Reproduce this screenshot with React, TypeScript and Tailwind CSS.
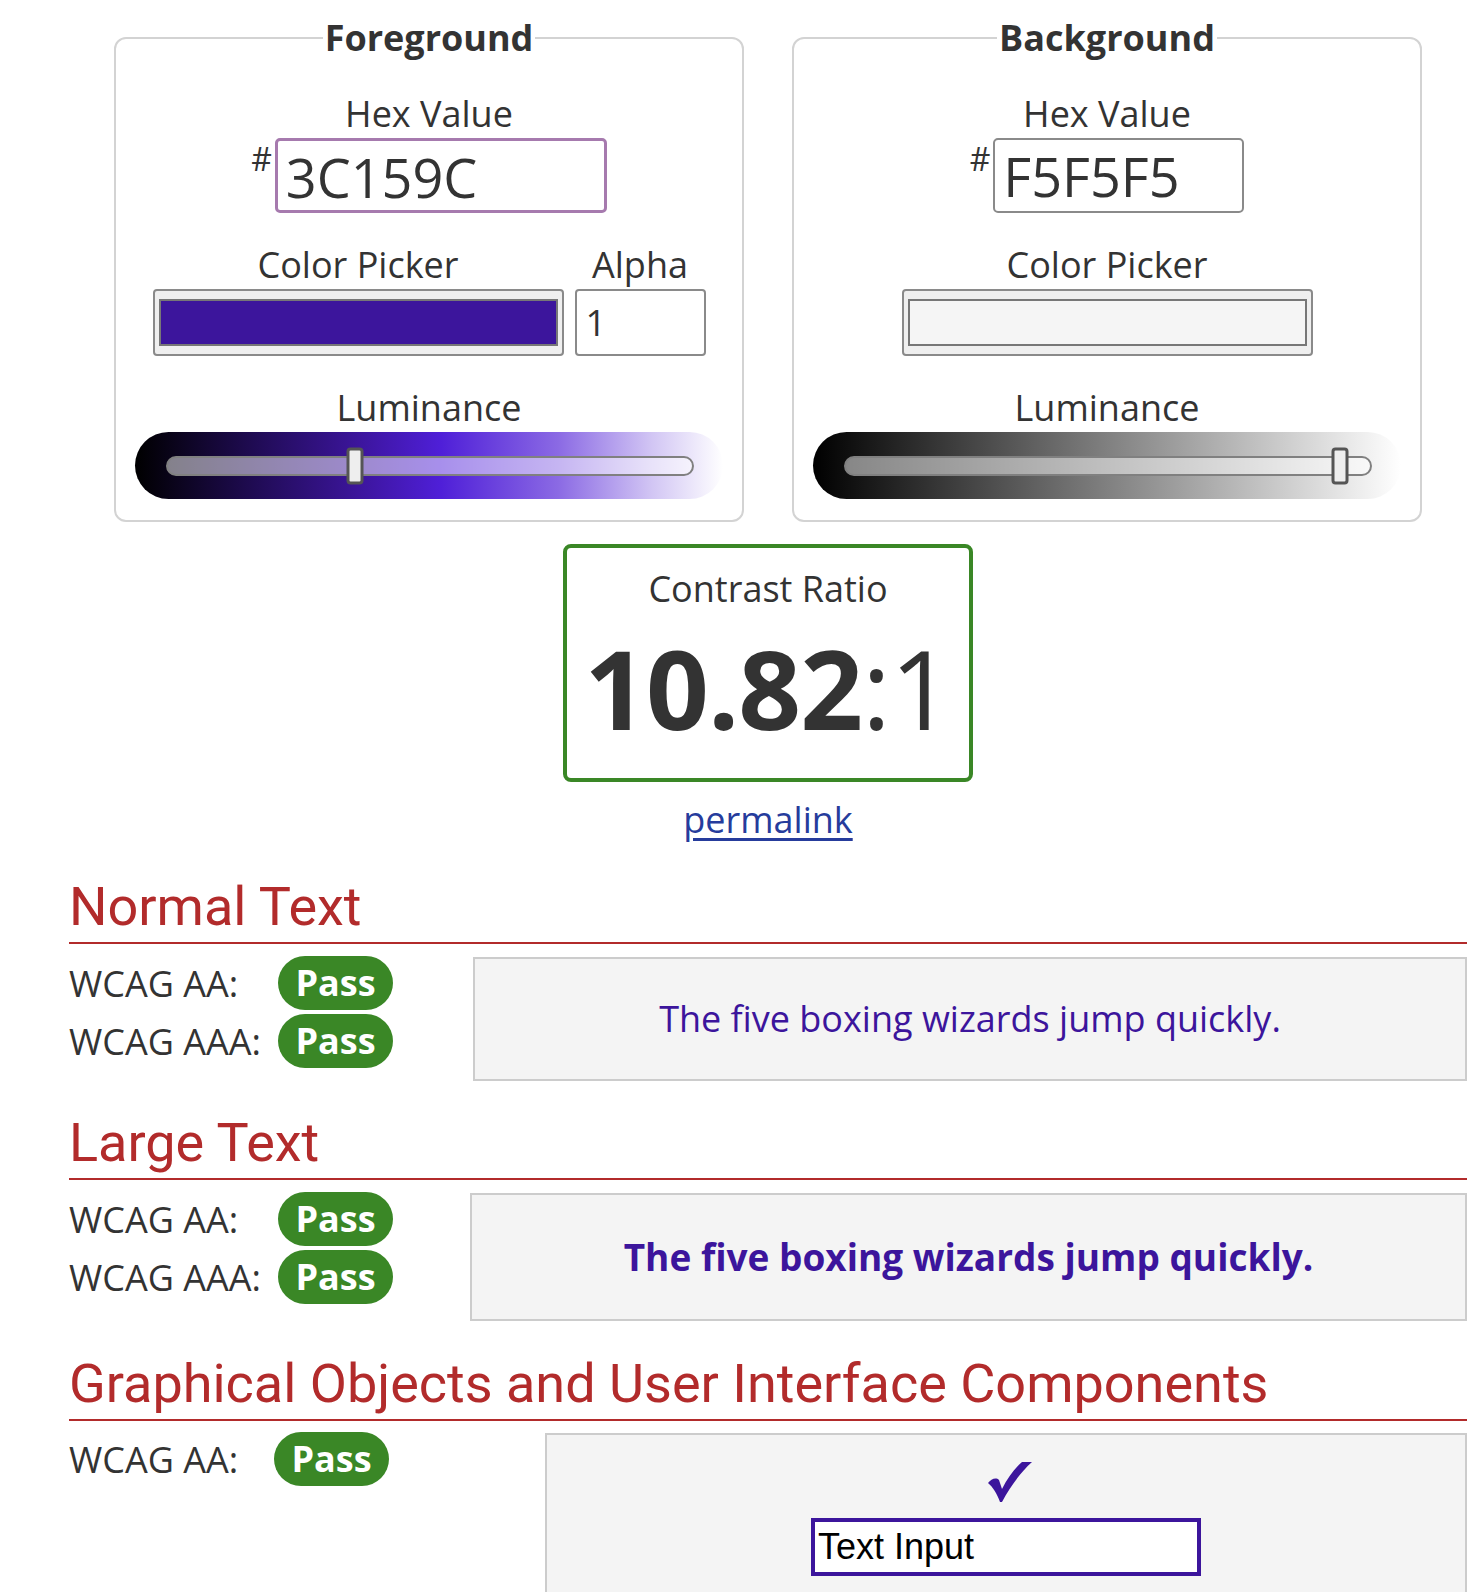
import React from "react";

const FG = "#3c159c";

function Label({ children }: { children: React.ReactNode }) {
  return <div className="text-[36px] leading-[49px] text-center">{children}</div>;
}

function Picker({ color, className }: { color: string; className?: string }) {
  return (
    <div
      className={
        "h-[67px] rounded-[4px] border-2 border-[#8a8a8a] bg-[#efefef] px-[4px] py-[8px] " +
        (className || "")
      }
    >
      <div className="h-full w-full border-2 border-[#777]" style={{ background: color }} />
    </div>
  );
}

function Slider({ gradient, thumbLeft }: { gradient: string; thumbLeft: number }) {
  return (
    <div
      className="relative mx-auto h-[67px] w-[588px] rounded-full pl-[31px] pr-[29px] flex items-center"
      style={{ background: gradient }}
    >
      <div className="relative h-[20px] w-full rounded-full border-2 border-[#808080] bg-white/50">
        <div
          className="absolute top-1/2 h-[37px] w-[17px] -translate-x-1/2 -translate-y-1/2 rounded-[4px] border-[3px] border-[#555] bg-[#eee]"
          style={{ left: thumbLeft }}
        />
      </div>
    </div>
  );
}

function Panel({
  title,
  hex,
  inputW,
  focused,
  alpha,
  color,
  gradient,
  thumbLeft,
}: {
  title: string;
  hex: string;
  inputW: string;
  focused: boolean;
  alpha: boolean;
  color: string;
  gradient: string;
  thumbLeft: number;
}) {
  return (
    <fieldset className="w-[630px] rounded-[12px] border-2 border-[#d3d3d3] pt-[26px] pb-[21px]">
      <legend className="mx-auto px-[2px] text-[36px] font-bold leading-[50px]">{title}</legend>
      <Label>Hex Value</Label>
      <div className="flex justify-center">
        <span className="mt-[4px] mr-[3px] text-[32px] leading-[34px]">#</span>
        <div
          className={
            "h-[75px] rounded-[5px] bg-white pl-[8px] text-[54px] leading-[72px] " +
            inputW +
            (focused ? " border-[3px] border-[#a67aae]" : " border-2 border-[#8a8a8a]")
          }
        >
          {hex}
        </div>
      </div>
      <div className="mt-[27px] flex justify-center gap-[11px]">
        <div>
          <Label>Color Picker</Label>
          <Picker color={color} className="w-[411px]" />
        </div>
        {alpha && (
          <div>
            <Label>Alpha</Label>
            <div className="h-[67px] w-[131px] rounded-[4px] border-2 border-[#8a8a8a] bg-white pl-[9px] text-[36px] leading-[64px]">
              1
            </div>
          </div>
        )}
      </div>
      <div className="mt-[27px]">
        <Label>Luminance</Label>
      </div>
      <Slider gradient={gradient} thumbLeft={thumbLeft} />
    </fieldset>
  );
}

function Pass() {
  return (
    <span className="flex h-[54px] w-[115px] items-center justify-center rounded-full bg-[#3a8726] text-[36px] font-bold leading-none text-white">
      Pass
    </span>
  );
}

function Row({ label, labelW }: { label: string; labelW: string }) {
  return (
    <div className="flex h-[54px] items-center">
      <span className={"text-[36px] leading-[49px] " + labelW}>{label}</span>
      <Pass />
    </div>
  );
}

function Heading({ children }: { children: React.ReactNode }) {
  return (
    <h2
      className="border-b-2 border-[#b22b2b] pb-[3px] text-[54px] leading-[65px] text-[#b22b2b]"
      style={{ fontFamily: "Roboto, 'Liberation Sans', sans-serif" }}
    >
      {children}
    </h2>
  );
}

function Check() {
  return (
    <svg width="44" height="40" viewBox="0 0 44 40" fill={FG}>
      <path d="M0 21 C3 17 8 15 11 18 L14 27 C20 15 27 6 34 0 L44 0 C32 11 22 25 14 40 L12 40 C9 32 5 25 0 21 Z" />
    </svg>
  );
}

export default function App() {
  return (
    <div
      className="min-h-[1592px] bg-white pl-[69px] pr-[5px] pt-[13px] text-[#333]"
      style={{ fontFamily: "'Open Sans', 'Liberation Sans', sans-serif" }}
    >
      <div className="flex justify-center gap-[48px]">
        <Panel
          title="Foreground"
          hex="3C159C"
          inputW="w-[332px]"
          focused
          alpha
          color={FG}
          gradient="linear-gradient(to right, #000 0%, #1c0a4a 18%, #3c159c 38%, #4f1fd8 52%, #8b6ae4 72%, #d2c6f4 88%, #ffffff 100%)"
          thumbLeft={187}
        />
        <Panel
          title="Background"
          hex="F5F5F5"
          inputW="w-[251px]"
          focused={false}
          alpha={false}
          color="#f5f5f5"
          gradient="linear-gradient(to right, #000 0%, #808080 50%, #ffffff 100%)"
          thumbLeft={494}
        />
      </div>

      <div className="mx-auto mt-[22px] flex h-[238px] w-[410px] flex-col items-center rounded-[8px] border-4 border-[#3a8726] pt-[16px]">
        <div className="text-[36px] leading-[49px]">Contrast Ratio</div>
        <div className="mt-[14px] text-[110px] leading-[120px] tracking-[-1px]">
          <span className="font-bold">10.82</span>:1
        </div>
      </div>
      <div className="mt-[13px] text-center text-[36px] leading-[49px]">
        <a href="#" className="text-[#263c9c] underline underline-offset-[5px]">
          permalink
        </a>
      </div>

      <div className="mt-[30px]">
        <Heading>Normal Text</Heading>
        <div className="mt-[12px] flex items-start">
          <div className="flex w-[404px] flex-col gap-[4px]">
            <Row label="WCAG AA:" labelW="w-[209px]" />
            <Row label="WCAG AAA:" labelW="w-[209px]" />
          </div>
          <div className="mt-[1px] flex h-[124px] flex-1 items-center justify-center border-2 border-[#ccc] bg-[#f4f4f4] text-[36px] text-[#3c159c]">
            The five boxing wizards jump quickly.
          </div>
        </div>
      </div>

      <div className="mt-[29px]">
        <Heading>Large Text</Heading>
        <div className="mt-[12px] flex items-start">
          <div className="flex w-[401px] flex-col gap-[4px]">
            <Row label="WCAG AA:" labelW="w-[209px]" />
            <Row label="WCAG AAA:" labelW="w-[209px]" />
          </div>
          <div className="mt-[1px] flex h-[128px] flex-1 items-center justify-center border-2 border-[#ccc] bg-[#f4f4f4] text-[37px] font-bold text-[#3c159c]">
            The five boxing wizards jump quickly.
          </div>
        </div>
      </div>

      <div className="mt-[30px]">
        <Heading>Graphical Objects and User Interface Components</Heading>
        <div className="mt-[11px] flex items-start">
          <div className="w-[476px]">
            <Row label="WCAG AA:" labelW="w-[205px]" />
          </div>
          <div className="mt-[1px] flex flex-1 flex-col items-center border-2 border-[#ccc] bg-[#f4f4f4] pt-[27px] pb-[60px]">
            <div className="ml-[8px]">
              <Check />
            </div>
            <div
              className="mt-[16px] h-[58px] w-[390px] border-4 border-[#3c159c] bg-white pl-[3px] text-[36px] leading-[50px] text-black"
              style={{ fontFamily: "'Liberation Sans', Arial, sans-serif" }}
            >
              Text Input
            </div>
          </div>
        </div>
      </div>
    </div>
  );
}
